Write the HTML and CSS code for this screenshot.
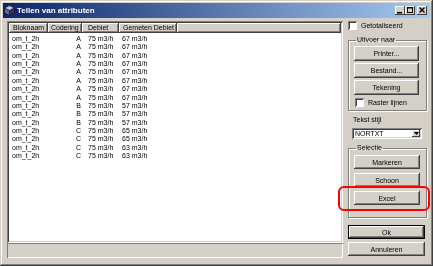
FILE: index.html
```html
<!DOCTYPE html>
<html lang="nl">
<head>
    <meta charset="UTF-8">
    <title>Tellen van attributen</title>
    <link rel="stylesheet" href="styles.css">
</head>
<body>
    <div class="window">
        <!-- Titelbalk -->
        <div class="titlebar">
            <svg class="app-icon" width="11" height="11" viewBox="0 0 11 11">
                <polygon points="5.5,0.5 10.5,3 5.5,5.5 0.5,3" fill="#b8c4e0"/>
                <polygon points="0.5,3 5.5,5.5 5.5,10.5 0.5,8" fill="#5a6a9a"/>
                <polygon points="5.5,5.5 10.5,3 10.5,8 5.5,10.5" fill="#2c3560"/>
                <polyline points="0.5,3 5.5,0.5 10.5,3 10.5,8 5.5,10.5 0.5,8 0.5,3 5.5,5.5 10.5,3" fill="none" stroke="#1a1a2e" stroke-width="0.8"/>
                <line x1="5.5" y1="5.5" x2="5.5" y2="10.5" stroke="#1a1a2e" stroke-width="0.8"/>
            </svg>
            <span class="title">Tellen van attributen</span>
            <div class="title-buttons">
                <span class="tbtn">
                    <svg width="10" height="9" viewBox="0 0 10 9"><rect x="2" y="6" width="5" height="1.5" fill="#000"/></svg>
                </span>
                <span class="tbtn">
                    <svg width="10" height="9" viewBox="0 0 10 9"><rect x="2.5" y="1.5" width="5" height="5" fill="none" stroke="#000" stroke-width="1"/><rect x="2" y="1" width="6" height="1.5" fill="#000"/></svg>
                </span>
                <span class="tbtn close">
                    <svg width="10" height="9" viewBox="0 0 10 9"><path d="M2.5 1.5 L7.5 6.5 M7.5 1.5 L2.5 6.5" stroke="#000" stroke-width="1.4"/></svg>
                </span>
            </div>
        </div>

        <div class="content">
            <!-- Lijst met resultaten -->
            <div class="left">
                <div class="list">
                    <div class="list-head">
                        <span class="hcell c1">Bloknaam</span>
                        <span class="hcell c2">Codering</span>
                        <span class="hcell c3">Debiet</span>
                        <span class="hcell c4">Gemeten Debiet</span>
                        <span class="hcell rest"></span>
                    </div>
                    <div class="list-body">
                        <div class="row"><span class="c1">om_t_2h</span><span class="c2">A</span><span class="c3">75 m3/h</span><span class="c4">67 m3/h</span></div>
                        <div class="row"><span class="c1">om_t_2h</span><span class="c2">A</span><span class="c3">75 m3/h</span><span class="c4">67 m3/h</span></div>
                        <div class="row"><span class="c1">om_t_2h</span><span class="c2">A</span><span class="c3">75 m3/h</span><span class="c4">67 m3/h</span></div>
                        <div class="row"><span class="c1">om_t_2h</span><span class="c2">A</span><span class="c3">75 m3/h</span><span class="c4">67 m3/h</span></div>
                        <div class="row"><span class="c1">om_t_2h</span><span class="c2">A</span><span class="c3">75 m3/h</span><span class="c4">67 m3/h</span></div>
                        <div class="row"><span class="c1">om_t_2h</span><span class="c2">A</span><span class="c3">75 m3/h</span><span class="c4">67 m3/h</span></div>
                        <div class="row"><span class="c1">om_t_2h</span><span class="c2">A</span><span class="c3">75 m3/h</span><span class="c4">67 m3/h</span></div>
                        <div class="row"><span class="c1">om_t_2h</span><span class="c2">A</span><span class="c3">75 m3/h</span><span class="c4">67 m3/h</span></div>
                        <div class="row"><span class="c1">om_t_2h</span><span class="c2">B</span><span class="c3">75 m3/h</span><span class="c4">57 m3/h</span></div>
                        <div class="row"><span class="c1">om_t_2h</span><span class="c2">B</span><span class="c3">75 m3/h</span><span class="c4">57 m3/h</span></div>
                        <div class="row"><span class="c1">om_t_2h</span><span class="c2">B</span><span class="c3">75 m3/h</span><span class="c4">57 m3/h</span></div>
                        <div class="row"><span class="c1">om_t_2h</span><span class="c2">C</span><span class="c3">75 m3/h</span><span class="c4">65 m3/h</span></div>
                        <div class="row"><span class="c1">om_t_2h</span><span class="c2">C</span><span class="c3">75 m3/h</span><span class="c4">65 m3/h</span></div>
                        <div class="row"><span class="c1">om_t_2h</span><span class="c2">C</span><span class="c3">75 m3/h</span><span class="c4">63 m3/h</span></div>
                        <div class="row"><span class="c1">om_t_2h</span><span class="c2">C</span><span class="c3">75 m3/h</span><span class="c4">63 m3/h</span></div>
                    </div>
                </div>
                <div class="statusbar"></div>
            </div>

            <!-- Bediening -->
            <div class="right">
                <label class="check-row"><span class="checkbox"></span>Getotaliseerd</label>

                <fieldset class="group output">
                    <legend>Uitvoer naar</legend>
                    <button class="btn">Printer...</button>
                    <button class="btn">Bestand...</button>
                    <button class="btn">Tekening</button>
                    <label class="check-row raster"><span class="checkbox"></span>Raster lijnen</label>
                </fieldset>

                <div class="field-label">Tekst stijl</div>
                <div class="combo">
                    <span class="combo-text">NORTXT</span>
                    <span class="combo-btn">
                        <svg width="5" height="3" viewBox="0 0 5 3"><polygon points="0,0 5,0 2.5,3" fill="#000"/></svg>
                    </span>
                </div>

                <fieldset class="group selection">
                    <legend>Selectie</legend>
                    <button class="btn">Markeren</button>
                    <button class="btn">Schoon</button>
                    <button class="btn">Excel</button>
                </fieldset>

                <button class="btn wide default">Ok</button>
                <button class="btn wide">Annuleren</button>
            </div>
        </div>

        <!-- Markering rond de Excel-knop -->
        <div class="highlight"></div>
    </div>
</body>
</html>
```

FILE: styles.css
```css
body {
    margin: 0;
    font-family: "Liberation Sans", Arial, sans-serif;
    font-size: 7px;
    background-color: #d4d0c8;
    color: #000;
    -webkit-font-smoothing: antialiased;
}
.window {
    position: relative;
    width: 433px;
    height: 266px;
    box-sizing: border-box;
    padding: 3px;
    background-color: #d4d0c8;
    box-shadow: inset -1px -1px #404040, inset 1px 1px #d4d0c8,
                inset -2px -2px #808080, inset 2px 2px #fff;
    display: flex;
    flex-direction: column;
    will-change: transform;
}

/* Titelbalk */
.titlebar {
    height: 15px;
    flex: none;
    display: flex;
    align-items: center;
    padding: 0 3px 0 1px;
    background: linear-gradient(to right, #0a246a, #a6caf0);
    color: white;
}
.app-icon {
    flex: none;
}
.title {
    margin-left: 2px;
    font-size: 8px;
    font-weight: bold;
    white-space: nowrap;
}
.title-buttons {
    margin-left: auto;
    display: flex;
}
.tbtn {
    width: 10px;
    height: 9px;
    background-color: #d4d0c8;
    box-shadow: inset -1px -1px #404040, inset 1px 1px #fff;
    display: flex;
}
.tbtn.close {
    margin-left: 2px;
}

/* Inhoud */
.content {
    flex: 1;
    display: flex;
    padding: 3px 0 0 4px;
    gap: 5px;
}
.left {
    width: 336px;
    display: flex;
    flex-direction: column;
}
.list {
    height: 222px;
    box-sizing: border-box;
    padding: 2px;
    background-color: white;
    box-shadow: inset 1px 1px #808080, inset -1px -1px #fff,
                inset 2px 2px #404040, inset -2px -2px #d4d0c8;
    overflow: hidden;
}
.list-head {
    display: flex;
    height: 10px;
}
.hcell {
    flex: none;
    box-sizing: border-box;
    height: 10px;
    line-height: 10px;
    padding-left: 4px;
    background-color: #d4d0c8;
    box-shadow: inset -1px -1px #404040, inset 1px 1px #fff, inset -2px -2px #808080;
    white-space: nowrap;
    overflow: hidden;
}
.hcell.rest {
    flex: 1;
}
.c1 { width: 39px; }
.c2 { width: 34px; }
.c3 { width: 37px; }
.c4 { width: 58px; }
.hcell.c2 { padding-left: 3px; letter-spacing: -0.1px; }
.hcell.c3 { padding-left: 6px; }

.list-body {
    padding-top: 2px;
}
.row {
    display: flex;
    height: 8.36px;
    line-height: 8.36px;
    white-space: nowrap;
}
.row span {
    flex: none;
    box-sizing: border-box;
    padding-left: 3px;
}
.row .c2 {
    text-align: right;
    padding-right: 1px;
}
.row .c3 { padding-left: 6px; }

.statusbar {
    height: 15px;
    box-sizing: border-box;
    box-shadow: inset 1px 1px #808080, inset -1px -1px #fff;
}

/* Rechterkolom */
.right {
    width: 79px;
    display: flex;
    flex-direction: column;
}
.check-row {
    display: flex;
    align-items: center;
    height: 9px;
    line-height: 9px;
    white-space: nowrap;
}
.checkbox {
    width: 9px;
    height: 9px;
    box-sizing: border-box;
    margin-right: 4px;
    background-color: white;
    box-shadow: inset 1px 1px #808080, inset -1px -1px #fff, inset 2px 2px #404040;
}
.group {
    margin: 6px 0 0;
    padding: 2px 5px 3px 5px;
    border: 1px solid #808080;
    box-shadow: 1px 1px #fff, inset 1px 1px #fff;
    display: flex;
    flex-direction: column;
    gap: 2px;
    min-width: 0;
}
.group legend {
    padding: 0 1px;
    margin-left: 2px;
    line-height: 8px;
    height: 8px;
}
.output .btn {
    width: 65px;
}
.check-row.raster {
    margin-top: 1px;
    margin-left: 1px;
}
.field-label {
    margin: 5px 0 0 5px;
    line-height: 8px;
    height: 8px;
}
.combo {
    margin: 4px 0 0 4px;
    width: 70px;
    height: 11px;
    box-sizing: border-box;
    padding: 2px;
    background-color: white;
    box-shadow: inset 1px 1px #808080, inset -1px -1px #fff,
                inset 2px 2px #404040, inset -2px -2px #d4d0c8;
    display: flex;
    align-items: center;
}
.combo-text {
    flex: 1;
    padding-left: 1px;
    line-height: 7px;
}
.combo-btn {
    width: 8px;
    height: 7px;
    background-color: #d4d0c8;
    box-shadow: inset -1px -1px #404040, inset 1px 1px #fff;
    display: flex;
    align-items: center;
    justify-content: center;
}
.selection {
    margin-top: 5px;
    padding: 3px 5px 12px 5px;
    gap: 4px;
}
.selection .btn {
    width: 66px;
    height: 14px;
}

.btn {
    font-family: "Liberation Sans", Arial, sans-serif;
    font-size: 7px;
    color: #000;
    height: 15px;
    padding: 0;
    border: none;
    background-color: #d4d0c8;
    box-shadow: inset -1px -1px #404040, inset 1px 1px #fff,
                inset -2px -2px #808080, inset 2px 2px #d4d0c8;
}
.btn.wide {
    width: 77px;
    height: 14px;
    margin-top: 3px;
}
.btn.default {
    margin-top: 7px;
    box-shadow: inset 0 0 0 1px #000, inset -2px -2px #404040, inset 2px 2px #fff,
                inset -3px -3px #808080;
}

/* Rode markering */
.highlight {
    position: absolute;
    left: 338px;
    top: 186px;
    width: 92px;
    height: 25px;
    box-sizing: border-box;
    border: 2px solid #f00;
    border-radius: 6px;
}
```
